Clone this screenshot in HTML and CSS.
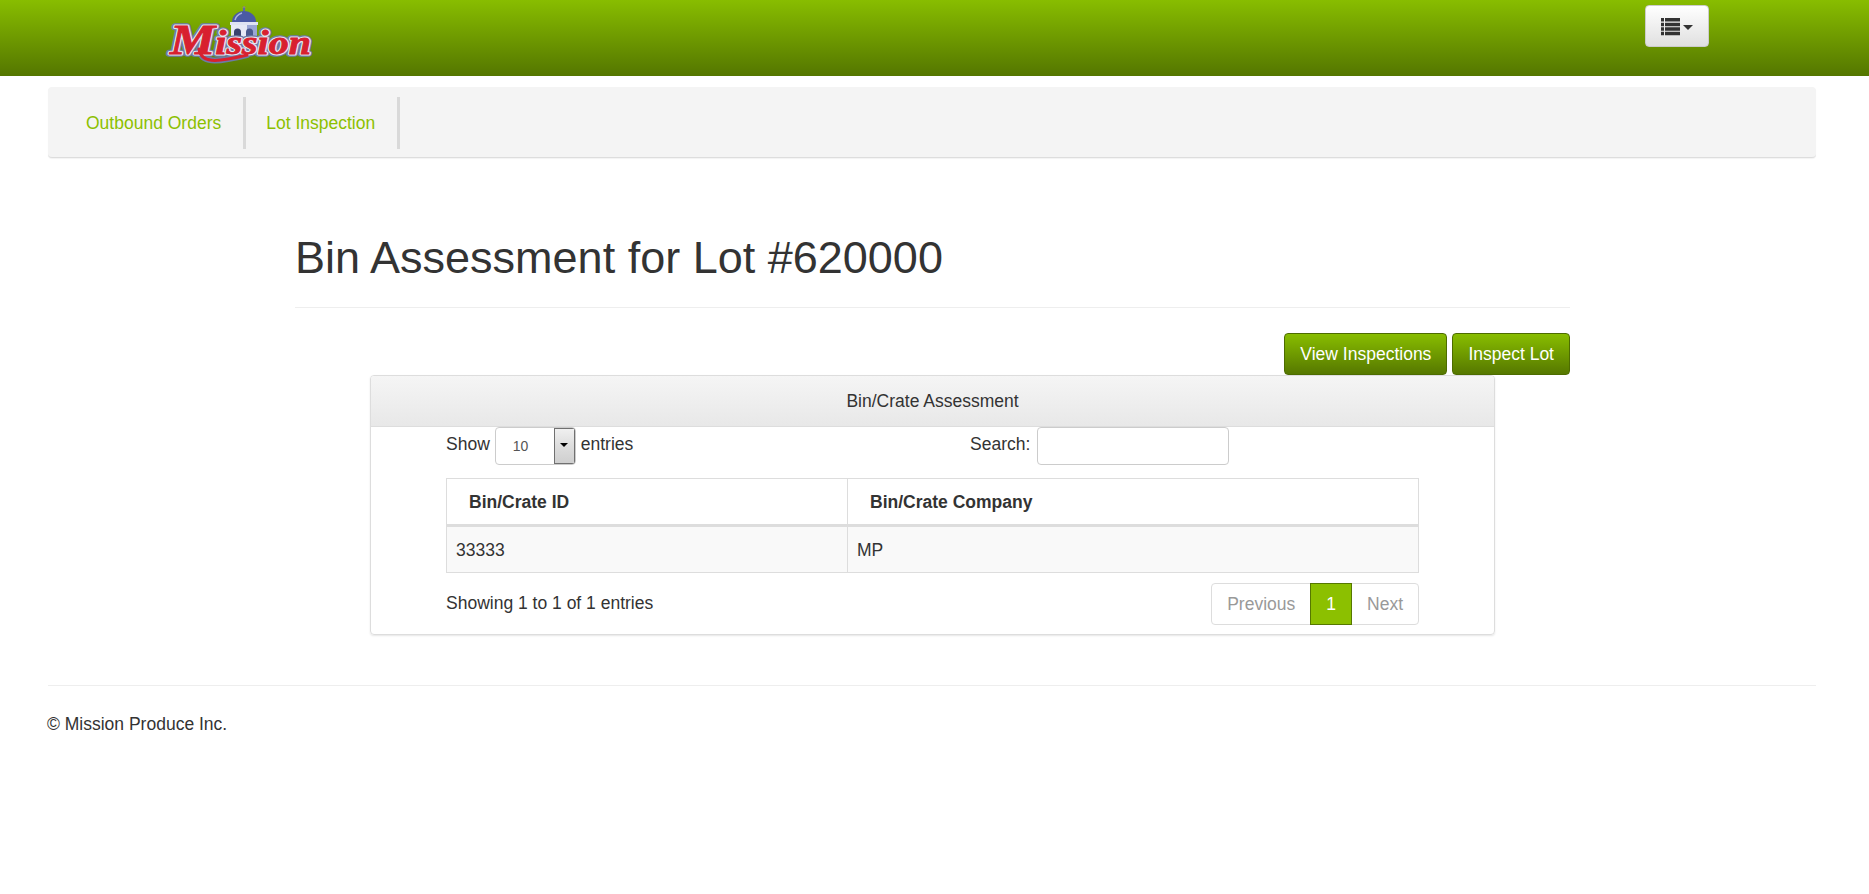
FILE: index.html
```html
<!DOCTYPE html>
<html lang="en">

<head>
    <meta charset="UTF-8">
    <title>Bin Assessment for Lot #620000</title>
    <link rel="stylesheet" href="styles.css">
</head>

<body>
    <header class="topbar">
        <a class="logo" href="#">
            <svg xmlns="http://www.w3.org/2000/svg" width="150" height="60" viewBox="0 0 150 60">
                <!-- dome -->
                <circle cx="81" cy="2.500" r="1.500" fill="#8d8a70"></circle>
                <rect x="80" y="3" width="2" height="3" fill="#5a6aa8"></rect>
                <path d="M69 17 C69 10 75 6 81 6 C87 6 93 10 93 17 Z" fill="#4a5aa4"></path>
                <path d="M72 15 C73 11 76 9 79 8" fill="none" stroke="#a9b4e0" stroke-width="1.500"></path>
                <rect x="67" y="17" width="28" height="3" fill="#dfe3f2"></rect>
                <rect x="68" y="20" width="26" height="14" fill="#e6e9f5"></rect>
                <path d="M84 20h10v14H84z" fill="#9aa6d4"></path>
                <path d="M71 33v-6a3.500 3.500 0 0 1 7 0v6z" fill="#39436e"></path>
                <path d="M83 33v-6a3.500 3.500 0 0 1 7 0v6z" fill="#4a5a8e"></path>
                <!-- wordmark -->
                <path class="logo-swash-out" d="M36 44 C38 58 52 58 84 50"></path>
                <text class="logo-out" x="7" y="49" textLength="141" lengthAdjust="spacingAndGlyphs"><tspan class="logo-cap">M</tspan>ission</text>
                <text class="logo-mid" x="7" y="49" textLength="141" lengthAdjust="spacingAndGlyphs"><tspan class="logo-cap">M</tspan>ission</text>
                <path class="logo-swash" d="M36 44 C38 58 52 58 84 50"></path>
                <text class="logo-fill" x="7" y="49" textLength="141" lengthAdjust="spacingAndGlyphs"><tspan class="logo-cap">M</tspan>ission</text>
            </svg>
        </a>
        <button class="menu-btn" type="button">
            <svg xmlns="http://www.w3.org/2000/svg" width="19" height="19" viewBox="0 0 19 19">
                <path d="M0 1h3v3.500H0zM4 1h15v3.500H4zM0 5.700h3v3.500H0zM4 5.700h15v3.500H4zM0 10.200h3v3.500H0zM4 10.200h15v3.500H4zM0 14.700h3v3.500H0zM4 14.700h15v3.500H4z" fill="#333"></path>
            </svg>
            <span class="caret"></span>
        </button>
    </header>

    <nav class="subnav">
        <a href="#">Outbound Orders</a>
        <a href="#">Lot Inspection</a>
    </nav>

    <main class="content">
        <h1 class="page-title">Bin Assessment for Lot #620000</h1>

        <div class="actions">
            <a class="btn-green" href="#">View Inspections</a>
            <a class="btn-green" href="#">Inspect Lot</a>
        </div>

        <section class="panel">
            <div class="panel-head">Bin/Crate Assessment</div>
            <div class="panel-body">
                <div class="table-top">
                    <div class="length">
                        Show
                        <span class="fake-select">
                            <span class="fake-value">10</span>
                            <span class="fake-arrow"></span>
                        </span>
                        entries
                    </div>
                    <label class="search">Search: <input type="text"></label>
                </div>

                <table class="bins">
                    <thead>
                        <tr>
                            <th class="col-id">Bin/Crate ID</th>
                            <th>Bin/Crate Company</th>
                        </tr>
                    </thead>
                    <tbody>
                        <tr>
                            <td>33333</td>
                            <td>MP</td>
                        </tr>
                    </tbody>
                </table>

                <div class="table-bottom">
                    <div class="info">Showing 1 to 1 of 1 entries</div>
                    <ul class="pager">
                        <li>Previous</li>
                        <li class="active">1</li>
                        <li>Next</li>
                    </ul>
                </div>
            </div>
        </section>
    </main>

    <footer class="site-footer">
        <p>© Mission Produce Inc.</p>
    </footer>
</body>

</html>
```
FILE: styles.css
```css
* {
    box-sizing: border-box;
}

body {
    margin: 0;
    font-family: "Liberation Sans", Arial, sans-serif;
    font-size: 17.500px;
    color: #333;
    background-color: #fff;
}

a {
    text-decoration: none;
}

.topbar {
    height: 76px;
    display: flex;
    justify-content: space-between;
    align-items: flex-start;
    padding: 5px 160px 0 163px;
    background: linear-gradient(to bottom, #88bd00 0%, #547600 100%);
}

.logo {
    display: block;
}

.menu-btn {
    width: 64px;
    height: 42px;
    display: flex;
    align-items: center;
    justify-content: center;
    gap: 3px;
    padding: 0;
    border: 1px solid #ccc;
    border-radius: 4px;
    background: linear-gradient(to bottom, #fff 0%, #e0e0e0 100%);
}

.caret {
    width: 0;
    height: 0;
    margin-top: 2px;
    border-top: 5px solid #333;
    border-left: 5px solid transparent;
    border-right: 5px solid transparent;
}

.logo-fill,
.logo-mid,
.logo-out {
    font-family: "Liberation Serif", serif;
    font-weight: bold;
    font-style: italic;
    font-size: 33px;
}

.logo-cap {
    font-size: 42px;
}

.logo-fill {
    fill: #d8202f;
    stroke: #d8202f;
    stroke-width: .8px;
}

.logo-mid {
    fill: #e4e6f0;
    stroke: #e4e6f0;
    stroke-width: 3px;
    stroke-linejoin: round;
}

.logo-out {
    fill: #6d7aa6;
    stroke: #6d7aa6;
    stroke-width: 5.500px;
    stroke-linejoin: round;
}

.logo-swash,
.logo-swash-out {
    fill: none;
    stroke-linecap: round;
}

.logo-swash {
    stroke: #d8202f;
    stroke-width: 3px;
}

.logo-swash-out {
    stroke: #6d7aa6;
    stroke-width: 6px;
}

.subnav {
    height: 71px;
    margin: 11px 53px 0 48px;
    padding: 10px 0 10px 18px;
    display: flex;
    background-color: #f4f4f4;
    border-radius: 4px;
    border-bottom: 1px solid #ddd;
    box-shadow: 0 1px 1px rgba(0, 0, 0, .05);
}

.subnav a {
    display: flex;
    align-items: center;
    height: 52px;
    padding: 0 22px 0 20px;
    color: #8cc000;
    border-right: 3px solid #d9d9d9;
}

.content {
    width: 1275px;
    margin-left: 295px;
}

.page-title {
    margin: 0;
    padding: 75px 0 24px;
    font-size: 45px;
    font-weight: 400;
    line-height: 50px;
    color: #333;
    border-bottom: 1px solid #eee;
}

.actions {
    display: flex;
    justify-content: flex-end;
    gap: 5px;
    margin-top: 25px;
}

.btn-green {
    height: 42px;
    padding: 1px 15px 0;
    display: flex;
    align-items: center;
    color: #fff;
    border: 1px solid #4d6c00;
    border-radius: 4px;
    background: linear-gradient(to bottom, #88bd00 0%, #567800 100%);
}

.panel {
    margin: 0 75px;
    height: 260px;
    border: 1px solid #ddd;
    border-radius: 4px;
    box-shadow: 0 1px 2px rgba(0, 0, 0, .1);
}

.panel-head {
    height: 51px;
    padding-top: 1px;
    display: flex;
    align-items: center;
    justify-content: center;
    background: linear-gradient(to bottom, #f5f5f5 0%, #e8e8e8 100%);
    border-bottom: 1px solid #ddd;
    border-radius: 3px 3px 0 0;
}

.panel-body {
    padding: 0 75px;
}

.table-top {
    height: 51px;
    display: flex;
}

.length {
    width: 524px;
    display: flex;
    align-items: flex-start;
    gap: 5px;
    line-height: 34px;
}

.fake-select {
    width: 81px;
    height: 38px;
    display: flex;
    border: 1px solid #ccc;
    border-radius: 4px;
    overflow: hidden;
}

.fake-value {
    flex: 1;
    padding-left: 17px;
    line-height: 36px;
    font-size: 14px;
    color: #555;
}

.fake-arrow {
    width: 21px;
    position: relative;
    border: 1px solid #707070;
    background: linear-gradient(to bottom, #f0f0f0 0%, #ddd 50%, #cfcfcf 100%);
}

.fake-arrow::after {
    content: "";
    position: absolute;
    left: 5px;
    top: 14px;
    border-top: 4px solid #000;
    border-left: 4px solid transparent;
    border-right: 4px solid transparent;
}

.search {
    line-height: 34px;
    display: flex;
    align-items: flex-start;
    gap: 7px;
}

.search input {
    width: 192px;
    height: 38px;
    padding: 0 8px;
    border: 1px solid #ccc;
    border-radius: 4px;
}

.bins {
    width: 973px;
    border-collapse: collapse;
    table-layout: fixed;
}

.bins th,
.bins td {
    border: 1px solid #ddd;
    text-align: left;
    font-size: 17.500px;
}

.col-id {
    width: 401px;
}

.bins th {
    height: 47px;
    padding: 2px 22px 0;
    border-bottom-width: 3px;
    font-weight: bold;
}

.bins td {
    height: 47px;
    padding: 1px 9px 0;
    background-color: #f9f9f9;
}

.table-bottom {
    display: flex;
    justify-content: space-between;
    align-items: center;
    margin-top: 10px;
}

.info {
    margin-top: -2px;
}

.pager {
    display: flex;
    margin: 0;
    padding: 0;
    list-style: none;
    height: 42px;
    color: #999;
    border: 1px solid #ddd;
    border-radius: 4px;
}

.pager li {
    padding: 0 15px;
    line-height: 40px;
}

.pager .active {
    margin: -1px 0;
    height: 42px;
    padding: 0 15px;
    color: #fff;
    background-color: #8cc000;
    border: 1px solid #567800;
}

.site-footer {
    margin: 50px 53px 0 48px;
    border-top: 1px solid #eee;
}

.site-footer p {
    margin: 28px 0 0 -1px;
    color: #333;
}
```
